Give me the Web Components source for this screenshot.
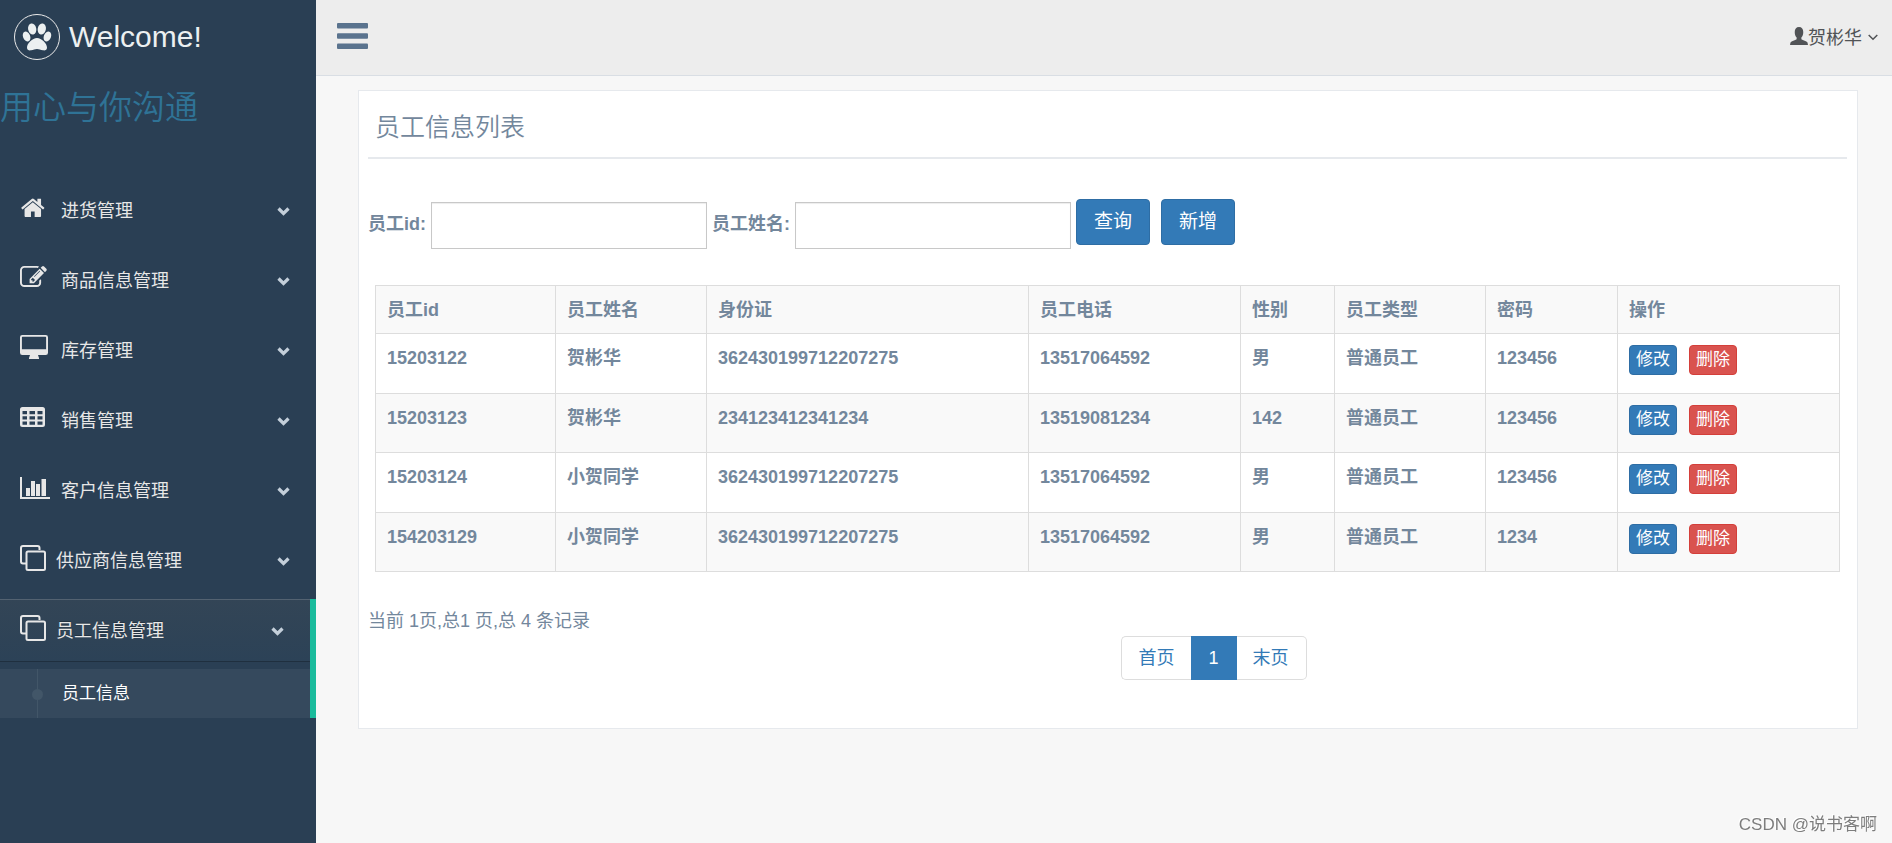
<!DOCTYPE html>
<html lang="zh-CN">
<head>
<meta charset="utf-8">
<title>员工信息列表</title>
<style>
html, body { margin: 0; min-height: 100%; }
body { font-family: "Liberation Sans", "Noto Sans CJK SC", sans-serif; font-size: 18px; line-height: 26px; color: #73879c; background: #f7f7f7; }
</style>
</head>
<body>
<app-shell>
  <side-nav slot="nav">
    <nav-item icon="home">进货管理</nav-item>
    <nav-item icon="edit">商品信息管理</nav-item>
    <nav-item icon="desktop">库存管理</nav-item>
    <nav-item icon="table">销售管理</nav-item>
    <nav-item icon="chart">客户信息管理</nav-item>
    <nav-item icon="clone">供应商信息管理</nav-item>
    <nav-item icon="clone" active>员工信息管理<nav-sub slot="children">员工信息</nav-sub></nav-item>
  </side-nav>
  <top-bar slot="top">贺彬华</top-bar>
  <content-panel>
    <span slot="heading">员工信息列表</span>
    <staff-search></staff-search>
    <staff-table></staff-table>
    <page-footer></page-footer>
  </content-panel>
</app-shell>
<corner-mark>CSDN @说书客啊</corner-mark>

<script>
const define = (name, html, setup) => {
  const template = document.createElement('template');
  template.innerHTML = html;
  customElements.define(name, class extends HTMLElement {
    constructor() {
      super();
      this.attachShadow({ mode: 'open' }).append(template.content.cloneNode(true));
    }
    connectedCallback() { if (setup) setup(this, this.shadowRoot); }
  });
};

const icons = {
  home: '<g transform="translate(0 2) scale(.0143)"><path d="M1472 992v480q0 26-19 45t-45 19h-384v-384h-256v384h-384q-26 0-45-19t-19-45v-480q0-1 .5-3t.5-3l575-474 575 474q1 2 1 6zm223-69l-62 74q-8 9-21 11h-3q-13 0-21-7l-692-577-692 577q-12 8-24 7-13-2-21-11l-62-74q-8-10-7-23.5t11-21.5l719-599q32-26 76-26t76 26l244 204v-195q0-14 9-23t23-9h192q14 0 23 9t9 23v408l219 182q10 8 11 21.5t-7 23.5z"/></g>',
  edit: '<g transform="translate(0 1) scale(.015)"><path d="M888 1184l116-116-152-152-116 116v56h96v96h56zm440-720q-16-16-33 1l-350 350q-17 17-1 33t33-1l350-350q17-17 1-33zm80 594v190q0 119-84.5 203.5t-203.5 84.5h-832q-119 0-203.5-84.5t-84.5-203.5v-832q0-119 84.5-203.5t203.5-84.5h832q63 0 117 25 15 7 18 23 3 17-9 29l-49 49q-14 14-32 8-23-6-45-6h-832q-66 0-113 47t-47 113v832q0 66 47 113t113 47h832q66 0 113-47t47-113v-126q0-13 9-22l64-64q15-15 35-7t20 29zm-96-738l288 288-672 672h-288v-288zm444 132l-92 92-288-288 92-92q28-28 68-28t68 28l152 152q28 28 28 68t-28 68z"/></g>',
  desktop: '<path fill-rule="evenodd" d="M2.3 2H25.7Q28 2 28 4.300V19.700Q28 22 25.700 22H18L19 25V26H9V25L10 22H2.300Q0 22 0 19.700V4.300Q0 2 2.300 2ZM2.500 3.700Q1.900 3.700 1.900 4.500V16.200H26.100V4.500Q26.100 3.700 25.500 3.700Z"/>',
  table: '<path fill-rule="evenodd" d="M2.500 4H22.500Q25 4 25 6.500V21.500Q25 24 22.500 24H2.500Q0 24 0 21.500V6.500Q0 4 2.500 4ZM2.500 8V11.200H7V8ZM9.500 8V11.200H15V8ZM17.500 8V11.200H22.500V8ZM2.500 13.200V16.400H7V13.200ZM9.500 13.200V16.400H15V13.200ZM17.500 13.200V16.400H22.500V13.200ZM2.500 18.400V21.800H7V18.400ZM9.500 18.400V21.800H15V18.400ZM17.500 18.400V21.800H22.500V18.400Z"/>',
  chart: '<path d="M0 4H2V24H30V26H0ZM6 15H10V23H6ZM11 8H15V23H11ZM16 11H20V23H16ZM21.500 6H26V23H21.500Z"/>',
  clone: '<g fill="none" stroke="currentColor" stroke-width="2"><path d="M6 20.500H3Q1 20.500 1 18.500V5Q1 3 3 3H17.500Q19.500 3 19.500 5V7"/><rect x="6.500" y="8.500" width="18.500" height="18.500" rx="1.500"/></g>'
};

define('app-shell', `
<style>
  :host { display: grid; grid-template-columns: 316px minmax(0, 1fr); min-height: 100vh; }
  .side { background: #2a3f54; }
  main { padding: 14px 34px 14px 42px; }
</style>
<div class="side"><slot name="nav"></slot></div>
<div><slot name="top"></slot><main><slot></slot></main></div>`);

define('side-nav', `
<style>
  :host { display: block; color: #ecf0f1; }
  .brand { display: flex; align-items: center; gap: 9px; height: 74px; padding-left: 14px; box-sizing: border-box; color: inherit; text-decoration: none; font-size: 30px; line-height: 36px; }
  .brand svg { display: block; width: 46px; height: 46px; }
  h2 { margin: 10px 0 47px; font-size: 33px; line-height: 48px; font-weight: 350; color: #2f7396; }
</style>
<a class="brand" href="#">
  <svg viewBox="0 0 46 46" aria-hidden="true"><circle cx="23" cy="23" r="22.500" fill="none" stroke="#eaeaea"/>
    <g fill="currentColor"><ellipse cx="18.200" cy="15" rx="4.100" ry="5.600" transform="rotate(-12 18.200 15)"/><ellipse cx="27.800" cy="15" rx="4.100" ry="5.600" transform="rotate(12 27.800 15)"/><ellipse cx="12.600" cy="22.500" rx="3.600" ry="5.100" transform="rotate(-22 12.600 22.500)"/><ellipse cx="33.400" cy="22.500" rx="3.600" ry="5.100" transform="rotate(22 33.400 22.500)"/><path d="M23 24C18.500 24 13 29.500 13 33.500C13 36.200 15 36.600 17 36.300C19.500 36 21 35 23 35S26.500 36 29 36.300C31 36.600 33 36.200 33 33.500C33 29.500 27.500 24 23 24Z"/></g></svg>
  <span>Welcome!</span>
</a>
<h2>用心与你沟通</h2>
<nav><slot></slot></nav>`);

define('nav-item', `
<style>
  :host { display: block; }
  :host([active]) { border-right: 6px solid #1abb9c; }
  a { display: flex; align-items: center; height: 62px; margin-bottom: 8px; padding: 0 26px 0 20px; box-sizing: border-box; color: #e7e7e7; text-decoration: none; }
  :host([active]) a { background: linear-gradient(#334556, #2c4257); box-shadow: rgba(0,0,0,.25) 0 1px 0, inset rgba(255,255,255,.16) 0 1px 0; text-shadow: rgba(0,0,0,.25) 0 -1px 0; }
  .icon { flex: none; width: 32px; height: 34px; margin-right: 9px; fill: currentColor; }
  :host([icon="clone"]) .icon { margin-right: 4px; }
  .label { flex: 1; padding-top: 2px; }
  .arrow { flex: none; width: 13px; height: 9px; padding-top: 2px; color: #c4cfda; }
</style>
<a href="#"><svg class="icon" viewBox="0 0 32 34" aria-hidden="true"></svg><span class="label"><slot></slot></span>
<svg class="arrow" viewBox="0 0 13 9" aria-hidden="true"><path d="M1.500 1.500L6.500 6.500L11.500 1.500" fill="none" stroke="currentColor" stroke-width="3.200"/></svg></a>
<slot name="children"></slot>`, (host, root) => {
  root.querySelector('.icon').innerHTML = icons[host.getAttribute('icon')];
});

define('nav-sub', `
<style>
  :host { display: block; }
  a { position: relative; display: flex; align-items: center; height: 49px; padding-left: 62px; background: #35495d; color: #fff; font-size: 17px; text-decoration: none; }
  a::before { content: ""; position: absolute; left: 37px; top: 0; bottom: 0; width: 1px; background: #425668; }
  a::after { content: ""; position: absolute; left: 32px; top: 20px; width: 11px; height: 11px; border-radius: 50%; background: #425668; }
</style>
<a href="#"><slot></slot></a>`);

define('top-bar', `
<style>
  :host { display: flex; justify-content: space-between; align-items: center; height: 76px; box-sizing: border-box; padding: 0 14px 0 21px; background: #ededed; border-bottom: 1px solid #d9dee4; color: #515356; }
  button { padding: 0 0 3px; border: 0; background: none; color: #5a738e; }
  button svg { display: block; width: 31px; height: 26px; }
  a { display: flex; align-items: center; color: inherit; text-decoration: none; }
  .user { width: 18px; height: 18px; margin-bottom: 4px; }
  .arrow { width: 10px; height: 7px; margin-left: 6px; }
</style>
<button type="button" aria-label="切换菜单"><svg viewBox="0 0 31 26" fill="currentColor"><rect width="31" height="5.500" rx="1"/><rect y="10.300" width="31" height="5.500" rx="1"/><rect y="20.500" width="31" height="5.500" rx="1"/></svg></button>
<a href="#"><svg class="user" viewBox="0 0 19 18" preserveAspectRatio="none" fill="currentColor" aria-hidden="true"><path d="M9.500 0C6.500 0 5 2 5 5C5 7.500 5.700 9.200 7 10.400V12.200C5.500 13.400 1.500 13.800 .5 15.500L0 18H19L18.500 15.500C17.500 13.800 13.500 13.400 12 12.200V10.400C13.300 9.200 14 7.500 14 5C14 2 12.500 0 9.500 0Z"/></svg><slot></slot><svg class="arrow" viewBox="0 0 10 7" aria-hidden="true"><path d="M.7 1L5 5.300L9.300 1" fill="none" stroke="currentColor" stroke-width="1.500"/></svg></a>`);

define('content-panel', `
<style>
  :host { display: block; padding: 0 10px 48px 9px; background: #fff; border: 1px solid #e6e9ed; }
  h1 { margin: 0 0 40px; padding: 18px 7px 12px; border-bottom: 2px solid #e6e9ed; font-size: 25px; line-height: 36px; font-weight: 350; }
</style>
<h1><slot name="heading"></slot></h1>
<slot></slot>`);

define('staff-search', `
<style>
  :host { display: block; }
  form { display: flex; align-items: center; margin-bottom: 36px; gap: 5px; }
  label { font-weight: 700; }
  input { width: 276px; height: 47px; margin-top: 3px; box-sizing: border-box; padding: 0 12px; border: 1px solid #c8c8c8; background: #fff; box-shadow: inset 0 1px 1px rgba(0,0,0,.075); font: inherit; color: inherit; }
  button { width: 74px; height: 46px; margin-bottom: 4px; padding: 0; border: 1px solid #2e6da4; border-radius: 4px; background: #337ab7; color: #fff; font: inherit; font-size: 19px; }
  button + button { margin-left: 6px; }
</style>
<form>
  <label for="sid">员工id:</label><input id="sid" type="text">
  <label for="sname">员工姓名:</label><input id="sname" type="text">
  <button type="button">查询</button><button type="button">新增</button>
</form>`);

define('staff-table', `
<style>
  :host { display: block; margin: 0 7px 36px; }
  table { width: 100%; table-layout: fixed; border-collapse: collapse; font-weight: 700; }
  th, td { padding: 11px; border: 1px solid #ddd; text-align: left; vertical-align: top; }
  th, tr:nth-child(even) td { padding-bottom: 10px; }
  th { padding-top: 10px; height: 27px; }
  td { height: 37px; }
  th { height: 26px; padding: 11px 11px 10px; }
  tr { background: #fff; }
  thead tr, tbody tr:nth-child(even) { background: #f9f9f9; }
  .actions { display: flex; gap: 12px; }
  button { width: 48px; height: 30px; padding: 0; border: 1px solid #2e6da4; border-radius: 4px; background: #337ab7; color: #fff; font: inherit; font-weight: 400; font-size: 17px; line-height: 26px; }
  button.remove { border-color: #d43f3a; background: #d9534f; }
</style>
<table>
  <colgroup></colgroup>
  <thead><tr></tr></thead>
  <tbody></tbody>
</table>`, (host, root) => {
  const widths = [180, 151, 322, 212, 94, 151, 132, 222];
  const heads = ['员工id', '员工姓名', '身份证', '员工电话', '性别', '员工类型', '密码', '操作'];
  const rows = [
    ['15203122', '贺彬华', '362430199712207275', '13517064592', '男', '普通员工', '123456'],
    ['15203123', '贺彬华', '234123412341234', '13519081234', '142', '普通员工', '123456'],
    ['15203124', '小贺同学', '362430199712207275', '13517064592', '男', '普通员工', '123456'],
    ['154203129', '小贺同学', '362430199712207275', '13517064592', '男', '普通员工', '1234']
  ];
  root.querySelector('colgroup').innerHTML = widths.map(w => `<col style="width:${w}px">`).join('');
  root.querySelector('thead tr').innerHTML = heads.map(h => `<th scope="col">${h}</th>`).join('');
  root.querySelector('tbody').innerHTML = rows.map(r => `<tr>${r.map(c => `<td>${c}</td>`).join('')}<td><div class="actions"><button type="button">修改</button><button type="button" class="remove">删除</button></div></td></tr>`).join('');
});

define('page-footer', `
<style>
  :host { display: flex; align-items: flex-start; }
  p { margin: 0; }
  nav { flex: 1; display: flex; justify-content: center; padding: 28px 10px 0 0; }
  a { display: block; padding: 8px 17px; border: 1px solid #ddd; background: #fff; color: #337ab7; text-decoration: none; }
  a:first-child { padding-right: 16px; border-right: 0; border-radius: 5px 0 0 5px; }
  a:last-child { padding-left: 16px; border-left: 0; border-radius: 0 5px 5px 0; }
  a[aria-current] { border-color: #337ab7; background: #337ab7; color: #fff; }
</style>
<p>当前 1页,总1 页,总 4 条记录</p>
<nav aria-label="分页"><a href="#">首页</a><a href="#" aria-current="page">1</a><a href="#">末页</a></nav>`);

define('corner-mark', `
<style>
  :host { position: fixed; right: 15px; bottom: 5px; font-size: 17px; color: #7d7d7d; text-shadow: -1px -1px 0 #fff; }
</style>
<slot></slot>`);
</script>
</body>
</html>
